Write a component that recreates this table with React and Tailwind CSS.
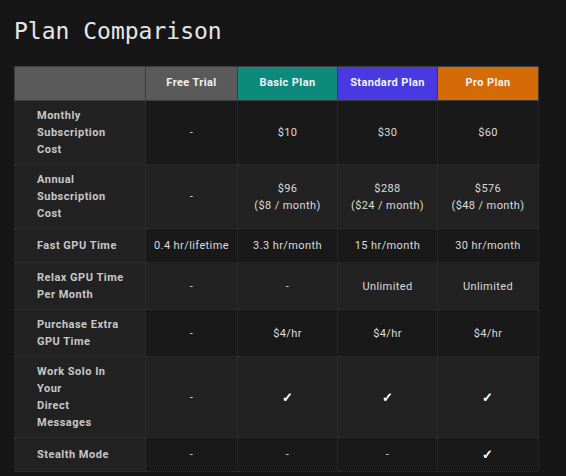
const plans = [
  { name: 'Free Trial', bg: 'bg-[#5a5a5a]' },
  { name: 'Basic Plan', bg: 'bg-[#0e8a7c]' },
  { name: 'Standard Plan', bg: 'bg-[#4839e0]' },
  { name: 'Pro Plan', bg: 'bg-[#d46b07]' },
];

const rows = [
  { label: ['Monthly', 'Subscription', 'Cost'], values: ['-', '$10', '$30', '$60'] },
  {
    label: ['Annual', 'Subscription', 'Cost'],
    values: ['-', ['$96', '($8 / month)'], ['$288', '($24 / month)'], ['$576', '($48 / month)']],
  },
  { label: ['Fast GPU Time'], values: ['0.4 hr/lifetime', '3.3 hr/month', '15 hr/month', '30 hr/month'] },
  { label: ['Relax GPU Time', 'Per Month'], values: ['-', '-', 'Unlimited', 'Unlimited'] },
  { label: ['Purchase Extra', 'GPU Time'], values: ['-', '$4/hr', '$4/hr', '$4/hr'] },
  { label: ['Work Solo In', 'Your', 'Direct', 'Messages'], values: ['-', '✓', '✓', '✓'] },
  { label: ['Stealth Mode'], values: ['-', '-', '-', '✓'] },
];

function Lines({ text }) {
  const lines = Array.isArray(text) ? text : [text];
  return lines.map((l, i) =>
    l === '✓' ? (
      <div key={i} className="text-[13px] font-bold text-white">{l}</div>
    ) : (
      <div key={i}>{l}</div>
    )
  );
}

export default function App() {
  return (
    <div className="min-h-screen bg-[#161616] pl-[14px] pt-[13px] font-['Roboto',sans-serif] overflow-hidden">
      <h1 className="font-['DejaVu_Sans_Mono',monospace] text-[23px] leading-[36px] text-[#e6e6e6]">
        Plan Comparison
      </h1>
      <table className="mt-[17px] w-[524px] table-fixed border-collapse">
        <colgroup>
          <col className="w-[131px]" />
          <col className="w-[92px]" />
          <col className="w-[100px]" />
          <col className="w-[100px]" />
          <col className="w-[101px]" />
        </colgroup>
        <thead>
          <tr className="h-[34px]">
            <th className="border border-[#3c3c3c] bg-[#5a5a5a]" />
            {plans.map((p) => (
              <th
                key={p.name}
                className={`border border-[#3c3c3c] ${p.bg} text-center text-[11px] font-bold tracking-[0.4px] text-[#f2f2f2]`}
              >
                {p.name}
              </th>
            ))}
          </tr>
        </thead>
        <tbody>
          {rows.map((r, i) => {
            const dark = i % 2 === 0;
            return (
              <tr key={i}>
                <td className="border border-dotted border-[#303030] bg-[#222222] py-[6px] pl-[22px] pr-2 align-middle text-[11px] font-bold leading-[17px] tracking-[0.5px] text-[#c8c8c8]">
                  <Lines text={r.label} />
                </td>
                {r.values.map((v, j) => (
                  <td
                    key={j}
                    className={`border border-dotted border-[#303030] ${dark ? 'bg-[#191919]' : 'bg-[#222222]'} py-2 text-center align-middle text-[11px] leading-[17px] tracking-[0.4px] text-[#dcdcdc]`}
                  >
                    <Lines text={v} />
                  </td>
                ))}
              </tr>
            );
          })}
        </tbody>
      </table>
    </div>
  );
}
